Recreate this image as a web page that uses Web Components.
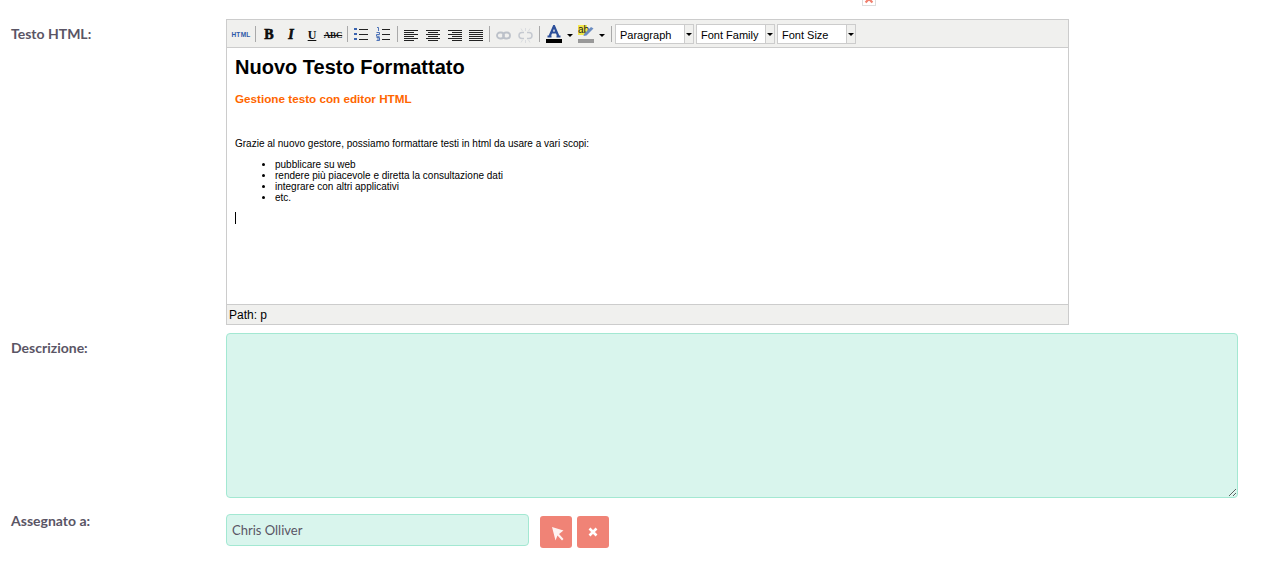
<!DOCTYPE html>
<html lang="it"><head><meta charset="utf-8"><title>Testo HTML</title>
<style>
html,body{margin:0;padding:0;background:#fff;height:563px;overflow:hidden}
body{font-family:Lato,sans-serif;color:#5a5565}
</style></head><body>
<form-page>
  <form-row label="Testo HTML:" style="height:314px;"><html-editor></html-editor></form-row>
  <form-row label="Descrizione:" style="height:181px"><note-area></note-area></form-row>
  <form-row label="Assegnato a:" style="--label-top:-2px"><assign-field value="Chris Olliver"></assign-field></form-row>
</form-page>
<script>
function def(name, css, html){
  customElements.define(name, class extends HTMLElement{
    connectedCallback(){
      if(this.shadowRoot) return;
      const r=this.attachShadow({mode:'open'});
      r.innerHTML='<style>'+css+'</style>'+(typeof html==='function'?html(this):html);
    }
  });
}
def('form-page',
 ':host{display:block;position:relative;padding:19px 0 0 11px;height:544px}'+
 '.close{position:absolute;left:862px;top:-8px;width:14px;height:14px;border:1px solid #ddd;box-sizing:border-box;background:#fff}',
 '<svg class="close" viewBox="0 0 14 14" aria-hidden="true"><path d="M3 3l8 8M11 3l-8 8" stroke="#f0806f" stroke-width="2.6"/></svg><slot></slot>');
def('form-row',
 ':host{display:grid;grid-template-columns:215px 1fr}'+
 '.l{font:700 14px/17px Lato,sans-serif;color:#5a5565;margin-top:var(--label-top,6px)}',
 h=>'<div class="l">'+h.getAttribute('label')+'</div><div><slot></slot></div>');
const lines=(short,off)=>'<svg width="14" height="11" viewBox="0 0 14 11" shape-rendering="crispEdges">'+[0,1,2,3,4,5].map(n=>{const long=n%2==0;return '<rect x="'+(long?0:off)+'" y="'+(n*2)+'" width="'+(long?14:short)+'" height="1" fill="#222"/>'}).join('')+'</svg>';
def('html-editor',
 ':host{display:flex;flex-direction:column;width:843px;height:306px;box-sizing:border-box;border:1px solid #ccc;background:#fff}'+
 '.tb{height:28px;box-sizing:border-box;background:#f0f0ee;border-bottom:1px solid #ccc;display:flex;align-items:center;padding:1px 0 0 2px;flex:none}'+
 '.ic{width:22px;height:20px;display:flex;align-items:center;justify-content:center;flex:none;color:#111}'+
 '.ic svg{display:block}'+
 '.html{font:700 6.5px/1 "Liberation Sans",sans-serif;color:#2e5aa8;width:24px;letter-spacing:.3px;padding-top:2px;box-sizing:border-box}'+
 '.b{font:900 14px/1 "Liberation Serif",serif;padding-top:2px;box-sizing:border-box}.b b{font-weight:900;-webkit-text-stroke:.6px #000}'+
 '.u{font:700 12px/1 "Liberation Serif",serif;padding-top:2px;box-sizing:border-box}.u span{text-decoration:underline}'+
 '.s{font:700 9px/1 "Liberation Serif",serif;padding-top:2px;box-sizing:border-box;letter-spacing:-.2px}.s span{text-decoration:line-through}'+
 '.sep{width:1px;height:16px;background:#a9a9a9;margin:0 2px 0 3px;flex:none}'+
 '.w21{width:21px}'+
 '.sel{width:79px;height:20px;box-sizing:border-box;border:1px solid #ccc;background:#fff;display:flex;font:11px/20px "Liberation Sans",sans-serif;color:#000;margin-right:2px;flex:none}'+
 '.sel span{flex:1;padding-left:4px;white-space:nowrap}.sel i{width:8px;border-left:1px solid #ccc;background:#f0f0ee;position:relative;flex:none}'+
 '.sel i:after{content:"";position:absolute;left:1px;top:8px;border:3px solid transparent;border-top-color:#000;border-bottom:0}'+
 '.arr{width:0;height:0;border:3px solid transparent;border-top-color:#000;border-bottom:0;margin:2px 0 0 1px;flex:none}'+
 '.body{flex:1;padding:0 8px;color:#000;font:10px/11px "Liberation Sans",sans-serif;overflow:hidden;min-height:0}'+
 'h1{font:700 20px/23px "Liberation Sans",sans-serif;margin:8px 0 0}'+
 'h2{font:700 11.7px/13px "Liberation Sans",sans-serif;color:#f60;margin:13px 0 0}'+
 'p{margin:0}.g{margin-top:33px}ul{margin:10px 0 0;padding:0 0 0 40px}li{height:11px}'+
 '.cur{display:block;width:1px;height:12px;background:#000;margin-top:9px}'+
 '.st{height:20px;box-sizing:border-box;background:#f0f0ee;border-top:1px solid #ccc;font:12px/20px "Liberation Sans",sans-serif;color:#000;padding-left:2px;flex:none}',
 `<div class="tb">
  <div class="ic html">HTML</div><div class="sep" style="margin-left:2px"></div>
  <div class="ic b"><b>B</b></div>
  <div class="ic b" style="font-style:italic"><b>I</b></div>
  <div class="ic u" style="width:20px"><span>U</span></div>
  <div class="ic s"><span>ABC</span></div><div class="sep"></div>
  <div class="ic"><svg width="15" height="14" viewBox="0 0 15 14"><g fill="#3b64b0"><rect x="0" y="1" width="3" height="2"/><rect x="0" y="6" width="3" height="2"/><rect x="0" y="11" width="3" height="2"/></g><path d="M5 2.500h9M5 7.500h9M5 12.500h9" stroke="#222"/></svg></div>
  <div class="ic"><svg width="15" height="14" viewBox="0 0 15 14"><path d="M1 .5h1.500v3.500M.5 5.500h3v2h-3v1.800h3M.5 10.500h3v3h-3M1 12h2.500" stroke="#3b64b0" fill="none" stroke-width=".9"/><path d="M6 2.500h8M6 7.500h8M6 12.500h8" stroke="#222"/></svg></div><div class="sep"></div>
  <div class="ic" style="padding-top:2px;box-sizing:border-box">${lines(10,0)}</div>
  <div class="ic" style="padding-top:2px;box-sizing:border-box">${lines(10,2)}</div>
  <div class="ic w21" style="padding-top:2px;box-sizing:border-box">${lines(10,4)}</div>
  <div class="ic w21" style="padding-top:2px;box-sizing:border-box">${lines(14,0)}</div>
  <div class="sep"></div>
  <div class="ic" style="padding-top:2px;box-sizing:border-box"><svg width="15" height="9" viewBox="0 0 15 9"><g fill="none" stroke="#bcc1c9" stroke-width="1.8"><rect x="1" y="1.500" width="7" height="6" rx="3"/><rect x="7" y="1.500" width="7" height="6" rx="3"/></g></svg></div>
  <div class="ic"><svg width="15" height="15" viewBox="0 0 15 15" style="margin-top:2px"><g fill="none" stroke="#c5c9d0" stroke-width="1.500"><path d="M6 4.500H4a3 3 0 0 0 0 6h2M9 4.500h2a3 3 0 0 1 0 6H9"/></g><path d="M7.500 0v3M7.500 12v3M3 .5l1.500 2.500M12 .5l-1.500 2.500M3 14.500l1.500-2.500M12 14.500l-1.500-2.500" stroke="#d4d7dc" stroke-width=".8"/></svg></div><div class="sep"></div>
  <div class="ic" style="width:24px"><svg width="16" height="18" viewBox="0 0 16 18"><path d="M5.500 11.500h-4M14.500 11.500h-4M3.500 11.500L8 1l4.500 10.500M5.500 7.500h5" fill="none" stroke="#2c4f9a" stroke-width="2.200"/><rect y="14" width="16" height="4" fill="#000"/></svg></div>
  <div class="arr"></div>
  <div class="ic" style="width:24px;margin-left:1px"><svg width="16" height="18" viewBox="0 0 16 18"><rect y="0" width="9" height="10" fill="#f0e64a"/><text x="0" y="8" font-family="Liberation Sans" font-size="10" fill="#222">ab</text><path d="M6 9l7-7 2.500 1.500-7 7-3 .5z" fill="#6a8cc0"/><rect y="14" width="16" height="4" fill="#999"/></svg></div>
  <div class="arr"></div><div class="sep" style="margin-left:6px;margin-right:3px"></div>
  <div class="sel"><span>Paragraph</span><i></i></div>
  <div class="sel"><span>Font Family</span><i></i></div>
  <div class="sel"><span>Font Size</span><i></i></div>
 </div>
 <div class="body">
  <h1>Nuovo Testo Formattato</h1>
  <h2>Gestione testo con editor HTML</h2>
  <p class="g">Grazie al nuovo gestore, possiamo formattare testi in html da usare a vari scopi:</p>
  <ul><li>pubblicare su web</li><li>rendere più piacevole e diretta la consultazione dati</li><li>integrare con altri applicativi</li><li>etc.</li></ul>
  <span class="cur"></span>
 </div>
 <div class="st">Path: p</div>`);
def('note-area',
 ':host{display:block}textarea{display:block;width:1012px;height:165px;box-sizing:border-box;margin:0;background:#d9f5ed;border:1px solid #a3e8d2;border-radius:4px;outline:0}',
 '<textarea aria-label="Descrizione"></textarea>');
def('assign-field',
 ':host{display:flex;align-items:center}'+
 'input{width:303px;height:32px;box-sizing:border-box;background:#d9f5ed;border:1px solid #a3e8d2;border-radius:4px;font:13px Lato,sans-serif;color:#5a5565;padding:0 5px;margin:0;outline:0}'+
 'button{width:32px;height:32px;border:0;border-radius:3px;background:#f08376;padding:0;margin-left:5px;display:flex;align-items:center;justify-content:center;position:relative;top:2px}'+
 'button:first-of-type{margin-left:11px}',
 h=>'<input value="'+h.getAttribute('value')+'"><button aria-label="Seleziona"><svg width="12" height="14" viewBox="0 0 12 14" style="margin:3px 0 0 3px"><path d="M0 0L11.500 3.500 7 7 11.500 12 10 13.500 5.500 8.500 3.500 13.500z" fill="#fff" opacity=".9"/></svg></button><button aria-label="Rimuovi"><svg width="10" height="10" viewBox="0 0 10 10" style="margin-top:-1px"><path d="M1.500 1.500l7 7M8.500 1.500l-7 7" stroke="#fff" stroke-width="2.600"/></svg></button>');
</script>
</body></html>
